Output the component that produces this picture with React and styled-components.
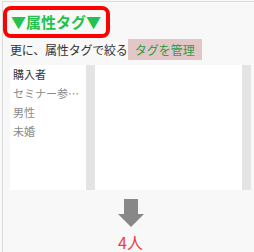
import React from "react";
import styled, { createGlobalStyle } from "styled-components";

const Global = createGlobalStyle`
  html, body { margin: 0; padding: 0; background: #f8f8f8; }
  body { font-family: "Noto Sans CJK JP", "Noto Sans", sans-serif; color: #333; }
`;

const Wrapper = styled.div`
  margin: 1px 0 0 2px;
  border-top: 1px solid #dcdcdc;
  border-left: 1px solid #dcdcdc;
  padding: 2px 3px 6px 0;
  background: #f8f8f8;
`;

const TitleBox = styled.div`
  width: fit-content;
  margin-top: 2px;
  border: 4px solid #ff0000;
  border-radius: 8px;
  padding: 0 5px 0 4px;
  height: 24px;
  line-height: 24px;
  font-size: 15px;
  font-weight: bold;
  color: #22c24e;
  white-space: nowrap;
`;

const FilterRow = styled.div`
  display: flex;
  align-items: center;
  margin-top: 1px;
  padding-left: 7px;
  height: 21px;
`;

const Label = styled.span`
  font-size: 12px;
  color: #333;
  letter-spacing: -0.2px;
  white-space: nowrap;
`;

const ManageTag = styled.span`
  background: #e2c6c8;
  color: #2f9e44;
  font-size: 12px;
  line-height: 21px;
  padding: 0 7px;
  white-space: nowrap;
`;

const Panel = styled.div`
  display: flex;
  margin-top: 5px;
  padding-left: 7px;
  height: 125px;
`;

const ListBox = styled.div`
  background: #fff;
  width: ${(p) => p.$w}px;
  box-sizing: border-box;
  padding: 0 3px;
  overflow: hidden;
`;

const ScrollTrack = styled.div`
  width: 9px;
  background: #e4e4e4;
`;

const Item = styled.div`
  font-size: 11px;
  line-height: 19px;
  height: 19px;
  color: ${(p) => (p.$active ? "#333" : "#8a8a8a")};
  white-space: nowrap;
  overflow: hidden;
  text-overflow: ellipsis;
`;

const Result = styled.div`
  display: flex;
  flex-direction: column;
  align-items: center;
  padding-left: 7px;
  width: 241px;
  box-sizing: content-box;
`;

const ArrowIcon = styled.svg`
  display: block;
  margin-top: 9px;
`;

const Count = styled.div`
  margin-top: 6px;
  font-size: 16px;
  line-height: 18px;
  color: #e8413c;
`;

const tags = [
  { name: "購入者", active: true },
  { name: "セミナー参加者", active: false },
  { name: "男性", active: false },
  { name: "未婚", active: false },
];

export default function App() {
  return (
    <>
      <Global />
      <Wrapper>
        <TitleBox>▼属性タグ▼</TitleBox>
        <FilterRow>
          <Label>更に、属性タグで絞る</Label>
          <ManageTag>タグを管理</ManageTag>
        </FilterRow>
        <Panel>
          <ListBox $w={76}>
            {tags.map((t) => (
              <Item key={t.name} $active={t.active}>
                {t.name}
              </Item>
            ))}
          </ListBox>
          <ScrollTrack />
          <ListBox $w={147} />
          <ScrollTrack />
        </Panel>
        <Result>
          <ArrowIcon width="26" height="28" viewBox="0 0 26 28">
            <rect x="6" y="0" width="14" height="15" fill="#888" />
            <polygon points="0,15 26,15 13,28" fill="#888" />
          </ArrowIcon>
          <Count>4人</Count>
        </Result>
      </Wrapper>
    </>
  );
}
